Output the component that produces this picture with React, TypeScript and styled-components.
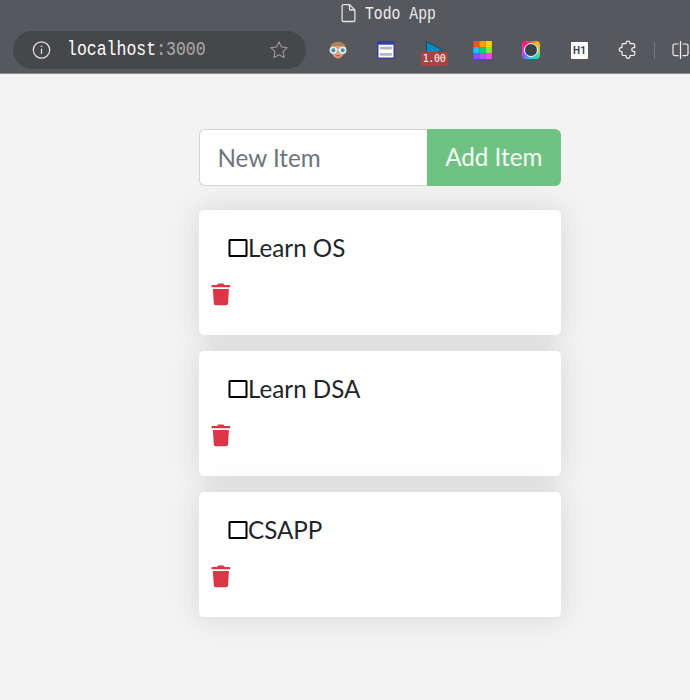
import React from 'react';
import styled, { createGlobalStyle } from 'styled-components';

const GlobalStyle = createGlobalStyle`
  *, *::before, *::after { box-sizing: border-box; }
  body {
    margin: 0;
    background: #f3f3f3;
    color: #212529;
    font-family: Lato, sans-serif;
    overflow: hidden;
  }
`;

const Page = styled.div`
  width: 690px;
  height: 700px;
  overflow: hidden;
`;

const Chrome = styled.header`
  height: 74px;
  background: #57585d;
  border-bottom: 1px solid #858689;
  overflow: hidden;
`;

const TitleBar = styled.div`
  height: 31px;
  padding: 0 0 5px 340px;
  display: flex;
  align-items: center;
`;

const Mono = styled.span<{ $size: number; $stretch: number }>`
  font-family: "Liberation Mono", monospace;
  font-size: ${p => p.$size}px;
  line-height: 20px;
  white-space: pre;
  transform: scaleX(${p => p.$stretch});
  transform-origin: left center;
`;

const TabTitle = styled(Mono)`
  margin: 2px 0 0 9px;
  color: #eeeeef;
`;

const Toolbar = styled.div`
  display: flex;
  height: 38px;
  padding-left: 13px;
  align-items: center;
`;

const AddressBar = styled.div`
  width: 293px;
  height: 38px;
  flex: none;
  padding: 0 18px 0 19px;
  display: flex;
  align-items: center;
  border-radius: 19px;
  background: #46474b;
`;

const Address = styled(Mono)`
  width: 202px;
  flex: none;
  margin-left: 15px;
  color: #fff;
`;

const Port = styled.span`
  color: #adaaa7;
`;

const Extensions = styled.div`
  display: flex;
  align-items: center;
  margin-left: 22px;
  gap: 28.3px;
  flex: none;
`;

const ExtensionSlot = styled.div`
  position: relative;
  width: 20px;
  height: 20px;
  flex: none;
  display: flex;
  align-items: center;
  justify-content: center;
`;

const SpeedBadge = styled.span`
  position: absolute;
  left: -4px;
  top: 12px;
  width: 27px;
  height: 14px;
  border-radius: 2px;
  background: #a84343;
  color: #fff;
  font: 10px/14px "DejaVu Sans Mono", monospace;
  letter-spacing: -0.3px;
  text-align: center;
`;

const HeadingTile = styled.div`
  width: 17px;
  height: 17px;
  border-radius: 1px;
  background: #fff;
  color: #3c4043;
  font: 700 10px/17px Roboto, sans-serif;
  text-align: center;
`;

const Divider = styled.div`
  width: 1px;
  height: 17px;
  margin: 0 16px 0 16px;
  background: #77787c;
  flex: none;
`;

const Content = styled.main`
  width: 362.5px;
  margin: 55px 0 0 198.5px;
`;

const InputGroup = styled.form`
  display: flex;
  height: 57px;
  margin-bottom: 24px;
`;

const ItemInput = styled.input`
  width: 228px;
  min-width: 0;
  height: 57px;
  padding: 0 18px;
  border: 1px solid #ced4da;
  border-right: 0;
  border-radius: 6px 0 0 6px;
  background: #fff;
  font: 24.2px Lato, sans-serif;
  outline: none;
  &::placeholder { color: #6c757d; opacity: 1; }
`;

const AddButton = styled.button`
  width: 134.5px;
  height: 57px;
  padding: 0 0 2px;
  border: 0;
  border-radius: 0 6px 6px 0;
  background: #70c283;
  color: #f6fbf7;
  font: 24.2px/55px Lato, sans-serif;
`;

const ItemCard = styled.section`
  height: 125px;
  margin-bottom: 16px;
  padding: 19px 12px 0;
  border-radius: 5px;
  background: #fff;
  box-shadow: 0 0 30px rgba(0, 0, 0, 0.13);
`;

const ItemLabel = styled.div`
  display: flex;
  align-items: center;
  height: 38px;
  padding-left: 17px;
  font-size: 24.2px;
  line-height: 38px;
`;

const RemoveButton = styled.button`
  display: block;
  width: 22px;
  height: 24px;
  margin: 16px 0 0 0.5px;
  padding: 0;
  border: 0;
  background: none;
  color: #dc3545;
  svg { display: block; }
`;

const Glyph = styled.svg`
  display: block;
  flex: none;
  fill: none;
`;

const PageIcon = () => (
  <Glyph width="16" height="20" viewBox="0 0 16 20" stroke="#e4e4e5" strokeWidth="1.3">
    <path d="M3.4 1.6H9.5L14.9 7v10.200a1.300 1.300 0 0 1-1.300 1.300H3.400a1.300 1.300 0 0 1-1.300-1.300V2.900a1.300 1.300 0 0 1 1.300-1.300Z" />
    <path d="M9.500 1.800V6a1 1 0 0 0 1 1h4.200" />
  </Glyph>
);

const InfoIcon = () => (
  <Glyph width="20" height="20" viewBox="0 0 20 20" stroke="#e5e5e6" strokeWidth="1.2">
    <circle cx="9.5" cy="10" r="8.2" />
    <path d="M9.5 8.7v5.2" />
    <circle cx="9.5" cy="6.3" r=".8" fill="#e5e5e6" stroke="none" />
  </Glyph>
);

const StarIcon = () => (
  <Glyph width="20" height="20" viewBox="0 0 20 20" stroke="#98989b" strokeWidth="1.1" strokeLinejoin="round">
    <path d="m10 1.7 2.5 5.2 5.7.8-4.1 4 1 5.7-5.1-2.7-5.1 2.7 1-5.7-4.1-4 5.7-.8Z" />
  </Glyph>
);

const FaceIcon = () => (
  <Glyph width="20" height="20" viewBox="0 0 20 20">
    <path d="M2.3 10C1.700 4.500 5 1.700 10 1.700S18.300 4.500 17.700 10Z" fill="#ad8553" />
    <path d="M3 9c.3 5.300 3.500 9.400 7 9.400S16.700 14.300 17 9l-2.500-2.500c-2 0-3.600-.5-4.500-1-1.200.6-3 1-4.500 1Z" fill="#e19a78" />
    <circle cx="5.300" cy="10.300" r="2.900" fill="#4f8ba0" stroke="#d9edf4" strokeWidth="1.800" />
    <circle cx="14.700" cy="10.300" r="2.900" fill="#4f8ba0" stroke="#d9edf4" strokeWidth="1.800" />
    <path d="M8 9.700h4" stroke="#d9edf4" strokeWidth="1.200" />
    <path d="M8.200 15.600h3.600" stroke="#be594f" strokeWidth="1.200" />
  </Glyph>
);

const NotesIcon = () => (
  <Glyph width="20" height="20" viewBox="0 0 20 20">
    <rect x="1" y="1" width="18" height="18" rx="1.5" fill="#3440a5" />
    <path d="M2.5 4.700h15v12.800h-15Z" fill="#fff" />
    <path d="M5 8.100h10M5 14.300h10" stroke="#b7b7b7" strokeWidth="2.800" strokeLinecap="round" />
  </Glyph>
);

const PlayIcon = () => (
  <Glyph width="20" height="20" viewBox="0 0 20 20">
    <path d="M1.5 1.5 17.7 10 1.5 18Z" fill="#078cc4" stroke="#173f58" strokeWidth=".8" />
  </Glyph>
);

const SWATCHES = [
  ['#ff4d0b', '#ff9800', '#ffd000'],
  ['#18b9ff', '#04cf69', '#80e43d'],
  ['#8849ff', '#bb48ff', '#ef43ff'],
];

const PaletteIcon = () => (
  <Glyph width="20" height="20" viewBox="0 0 20 20">
    {SWATCHES.map((row, y) => row.map((fill, x) => (
      <rect key={`${x}-${y}`} x={0.3 + x * 6.2} y={1 + y * 6} width="6.2" height="6" fill={fill} />
    )))}
    <path d="M.3 4h18.600M.3 10h18.600M3.500 1v18M9.700 1v18M16 1v18" stroke="#fff" strokeOpacity=".08" />
  </Glyph>
);

const WheelTile = styled.div`
  display: grid;
  place-items: center;
  width: 18px;
  height: 18px;
  border-radius: 4px;
  background: conic-gradient(from 0deg, #ff513c, #ffb323 45deg, #9bd85c 95deg, #25d5b0 145deg, #28cfff 185deg, #7869fc 225deg, #fa35e5 270deg, #ff1684 315deg, #ff513c);
`;

const Lens = styled.div`
  width: 14px;
  height: 14px;
  border: 1.5px solid #fff;
  border-radius: 50%;
  background: #36414c;
`;

const PuzzleIcon = () => (
  <Glyph width="20" height="20" viewBox="0 0 20 20" stroke="#f2f2f2" strokeWidth="1.2" strokeLinejoin="round">
    <path d="M5 3.700h3v-.6a2 2 0 0 1 4 0v.6h3.200a1.500 1.500 0 0 1 1.500 1.500v2.500h-1a1.900 1.900 0 0 0 0 3.800h1V14a1.500 1.500 0 0 1-1.500 1.500H12v.8a2 2 0 0 1-4 0v-.8H5.500A1.500 1.500 0 0 1 4 14v-2.500h-.8a1.900 1.900 0 0 1 0-3.800H4v-3a1 1 0 0 1 1-1Z" />
  </Glyph>
);

const SplitIcon = () => (
  <Glyph width="20" height="20" viewBox="0 0 20 20" stroke="#efefef" strokeWidth="1.2">
    <path d="M7.500 4H3.800A1.800 1.800 0 0 0 2 5.800v8a1.800 1.800 0 0 0 1.800 1.800h3.700M11.500 4h3.700A1.800 1.800 0 0 1 17 5.800v8a1.800 1.800 0 0 1-1.800 1.800h-3.700M9.500 1v18" />
  </Glyph>
);

const CheckboxIcon = () => (
  <Glyph width="20.500" height="22" viewBox="0 0 20.500 22">
    <rect x="1.500" y="3" width="17" height="16" rx=".6" stroke="#000" strokeWidth="2" />
  </Glyph>
);

const TrashIcon = () => (
  <Glyph width="20" height="24" viewBox="0 0 20 24">
    <path d="M1 1.900h5L7.300.6h5l1.300 1.300h5a.6.6 0 0 1 .6.6v1.700H.500V2.500a.6.6 0 0 1 .5-.6Z" fill="currentColor" />
    <path d="M1.900 6h16L17 20.600a1.800 1.800 0 0 1-1.800 1.700H4.600a1.800 1.800 0 0 1-1.800-1.700Z" fill="currentColor" />
  </Glyph>
);

const ITEMS = ['Learn OS', 'Learn DSA', 'CSAPP'];

export default function App() {
  return (
    <>
      <GlobalStyle />
      <Page>
        <Chrome>
          <TitleBar>
            <PageIcon />
            <TabTitle $size={18} $stretch={0.82}>Todo App</TabTitle>
          </TitleBar>
          <Toolbar>
            <AddressBar>
              <InfoIcon />
              <Address $size={20} $stretch={0.825}>localhost<Port>:3000</Port></Address>
              <StarIcon />
            </AddressBar>
            <Extensions>
              <ExtensionSlot><FaceIcon /></ExtensionSlot>
              <ExtensionSlot><NotesIcon /></ExtensionSlot>
              <ExtensionSlot><PlayIcon /><SpeedBadge>1.00</SpeedBadge></ExtensionSlot>
              <ExtensionSlot><PaletteIcon /></ExtensionSlot>
              <ExtensionSlot><WheelTile><Lens /></WheelTile></ExtensionSlot>
              <ExtensionSlot><HeadingTile>H1</HeadingTile></ExtensionSlot>
              <ExtensionSlot><PuzzleIcon /></ExtensionSlot>
            </Extensions>
            <Divider />
            <SplitIcon />
          </Toolbar>
        </Chrome>
        <Content>
          <InputGroup>
            <ItemInput placeholder="New Item" />
            <AddButton type="button">Add Item</AddButton>
          </InputGroup>
          {ITEMS.map(name => (
            <ItemCard key={name}>
              <ItemLabel><CheckboxIcon />{name}</ItemLabel>
              <RemoveButton aria-label="Remove item"><TrashIcon /></RemoveButton>
            </ItemCard>
          ))}
        </Content>
      </Page>
    </>
  );
}
